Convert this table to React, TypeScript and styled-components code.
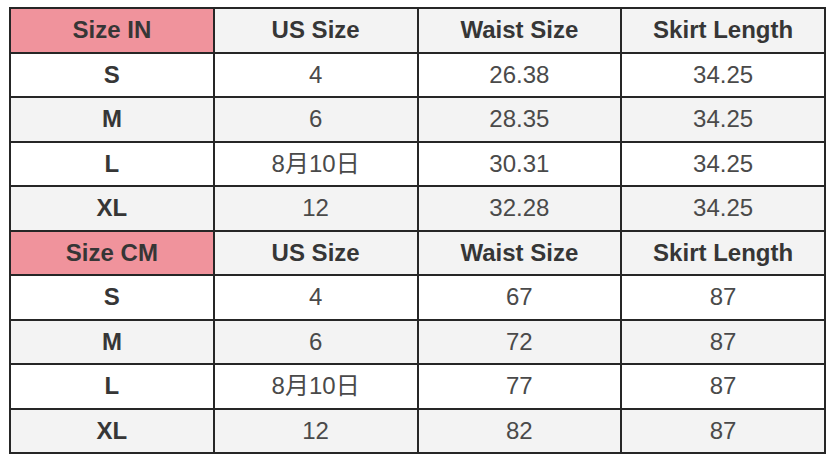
import React from 'react';
import styled, { createGlobalStyle } from 'styled-components';

const GlobalStyle = createGlobalStyle`
  html, body {
    margin: 0;
    padding: 0;
    background: #ffffff;
  }
  body {
    font-family: "Liberation Sans", Arial, "Noto Sans CJK SC", sans-serif;
  }
`;

type Tone = 'pink' | 'grey' | 'white';

const sections = [
  {
    label: 'Size IN',
    rows: [
      ['S', '4', '26.38', '34.25'],
      ['M', '6', '28.35', '34.25'],
      ['L', '8月10日', '30.31', '34.25'],
      ['XL', '12', '32.28', '34.25'],
    ],
  },
  {
    label: 'Size CM',
    rows: [
      ['S', '4', '67', '87'],
      ['M', '6', '72', '87'],
      ['L', '8月10日', '77', '87'],
      ['XL', '12', '82', '87'],
    ],
  },
];

const headings = ['US Size', 'Waist Size', 'Skirt Length'];

export default function App() {
  return (
    <>
      <GlobalStyle />
      <Page>
        <Table>
          {sections.map((section) => (
            <React.Fragment key={section.label}>
              <Cell $tone="pink" $bold>
                {section.label}
              </Cell>
              {headings.map((h) => (
                <Cell key={h} $tone="grey" $bold>
                  {h}
                </Cell>
              ))}
              {section.rows.map((row, i) =>
                row.map((value, j) => (
                  <Cell
                    key={`${i}-${j}`}
                    $tone={i % 2 === 0 ? 'white' : 'grey'}
                    $bold={j === 0}
                  >
                    {value}
                  </Cell>
                ))
              )}
            </React.Fragment>
          ))}
        </Table>
      </Page>
    </>
  );
}

const Page = styled.div`
  padding: 7px 0 0 9px;
`;

const Table = styled.div`
  width: 817px;
  height: 447px;
  box-sizing: border-box;
  display: grid;
  grid-template-columns: repeat(4, 1fr);
  grid-template-rows: repeat(10, 1fr);
  gap: 2px;
  padding: 2px;
  background: #262626;
`;

const toneColor: Record<Tone, string> = {
  pink: '#f0939c',
  grey: '#f3f3f3',
  white: '#ffffff',
};

const Cell = styled.div<{ $tone: Tone; $bold?: boolean }>`
  display: flex;
  align-items: center;
  justify-content: center;
  background: ${(p) => toneColor[p.$tone]};
  color: ${(p) => (p.$bold ? '#363636' : '#4a4a4a')};
  font-size: 24px;
  font-weight: ${(p) => (p.$bold ? 700 : 400)};
  line-height: 1;
`;
